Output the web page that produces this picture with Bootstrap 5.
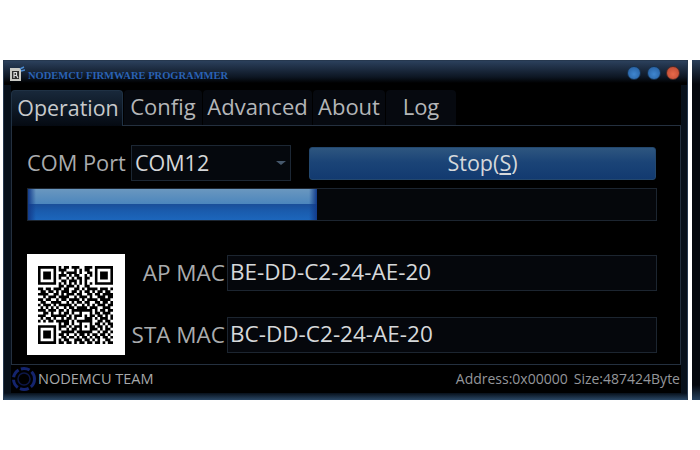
<!DOCTYPE html>
<html lang="en">
<head>
  <meta charset="UTF-8">
  <meta name="viewport" content="width=device-width, initial-scale=1">
  <title>NodeMCU Firmware Programmer</title>
  <link href="https://cdn.jsdelivr.net/npm/bootstrap@5.3.2/dist/css/bootstrap.min.css" rel="stylesheet">
  <style>
    body {
      background: #fff;
      margin: 0;
      height: 450px;
      overflow: hidden;
      font-family: "Open Sans", "Noto Sans", sans-serif;
    }
    .desk { padding: 60px 0 0 3px; gap: 4px; }
    .app-win {
      width: 685px;
      height: 340px;
      flex: none;
      background: #000;
      border: 1px solid #26384f;
      border-bottom: 0;
      box-shadow: inset 7px 0 0 #07101b, inset -6px 0 0 #07101b;
    }
    .next-win {
      flex: 1;
      height: 340px;
      background: linear-gradient(#2a3f5a, #05080e 24px, #05080e 325px, #27405e);
    }
    .title-bar {
      height: 24px;
      padding: 5px 7px 0 6px;
      background: linear-gradient(#2b405c, #0d1623 16px, #000 22px);
    }
    .app-title {
      font-family: "Liberation Serif", serif;
      font-weight: 700;
      font-size: 10.5px;
      line-height: 14px;
      color: #2a62b4;
      margin-left: 3px;
      margin-top: 3px;
      white-space: nowrap;
    }
    .win-dot { width: 14px; height: 14px; border-radius: 50%; margin-left: 6px; border: 1px solid #16314f; background: radial-gradient(circle at 50% 60%, #3f86cf, #235a9a); }
    .win-dot.close-dot { background: radial-gradient(circle at 50% 60%, #e8694a, #b6452f); border-color: #4d2a26; margin-left: 5px; }
    .tab-strip { padding: 5px 0 0 7px; gap: 1px; border: 0; height: 41px; }
    .tab-strip .nav-link {
      height: 36px;
      margin: 0;
      padding: 0;
      font-size: 22px;
      line-height: 33px;
      color: #b4b6b8;
      text-align: center;
      background: #06090f;
      border: 0;
      border-radius: 4px 4px 0 0;
    }
    .tab-strip .nav-link.active {
      color: #c8cacc;
      font-size: 21.4px;
      padding-left: 2px;
      background: linear-gradient(#18283a, #050a12);
      border: 1px solid #1f3144;
      border-bottom: 0;
      position: relative;
      z-index: 1;
    }
    .tab-op { width: 112px; }
    .tab-cfg { width: 78px; }
    .tab-adv { width: 109px; }
    .tab-abt { width: 72px; }
    .tab-log { width: 70px; }
    .tab-pane-box {
      margin: 0 6px 0 7px;
      height: 240px;
      padding: 19px 23px 0 15px;
      border: 1px solid #24303f;
      margin-top: -1px;
    }
    .field-label { font-size: 22.5px; color: #a9abad; line-height: 36px; white-space: nowrap; }
    .field-label.com-label { width: 104px; font-size: 21.8px; }
    .form-select.com-select {
      width: 160px;
      height: 36px;
      padding: 0 0 0 3px;
      font-size: 21.5px;
      line-height: 32px;
      color: #d4d6d8;
      background-color: #05080d;
      background-image: none;
      border: 1px solid #1c2734;
      border-radius: 0;
    }
    .select-wrap { position: relative; }
    .select-arrow {
      position: absolute;
      right: 5px;
      top: 16px;
      border: 5px solid transparent;
      border-top: 4px solid #46586c;
      border-bottom: 0;
    }
    .btn.stop-btn {
      width: 347px;
      height: 33px;
      margin: 2px 0 0 18px;
      padding: 0 0 2px;
      font-size: 21.5px;
      line-height: 29px;
      color: #d5d8db;
      background: linear-gradient(#2e567f, #1b4477 45%, #123a70);
      border: 1px solid #23476d;
      border-radius: 3px;
    }
    .progress.flash-bar {
      height: 33px;
      margin-top: 7px;
      background: #05070b;
      border: 1px solid #1c2530;
      border-radius: 0;
    }
    .progress.flash-bar .progress-bar {
      background:
        linear-gradient(90deg, #123a8a, transparent 8px, transparent calc(100% - 8px), #123a8a),
        linear-gradient(#6a97bf, #4c86bd 48%, #1a4f9a 50%, #1a5bac 70%, #1c66bc);
    }
    .qr-box {
      width: 98px;
      height: 101px;
      margin-top: 1px;
      background: #fff;
      flex: none;
      padding: 12px 11px;
    }
    .qr-box svg { display: block; }
    .mac-list { gap: 26px; padding-top: 2px; }
    .mac-label { width: 102px; text-align: right; padding-right: 2px; flex: none; }
    .form-control.mac-input {
      height: 36px;
      padding: 0 0 3px 2px;
      font-size: 22.5px;
      color: #d6d8da;
      background: #05070c;
      border: 1px solid #1c2530;
      border-radius: 0;
    }
    .status-bar { height: 28px; padding: 0 7px 0 7px; }
    .team-name { font-size: 14.5px; color: #a6a8aa; line-height: 26px; margin-left: 1px; }
    .flash-info { font-size: 14px; color: #94969a; line-height: 26px; white-space: nowrap; }
    .flash-info span + span { margin-left: 6px; }
    .bottom-edge { height: 7px; background: linear-gradient(#07101b, #2a4765); }
  </style>
</head>
<body>
  <div class="desk d-flex">
    <div class="app-win d-flex flex-column">
      <div class="title-bar d-flex align-items-start">
        <svg width="15" height="15" viewBox="0 0 15 15">
          <rect x="0" y="2" width="11" height="13" fill="#c9c9c4"/>
          <rect x="2" y="5" width="7" height="8" fill="#2b2b2b"/>
          <path d="M4 12V6.500H6.500V9.500H4M6.500 9.500L8 12" fill="none" stroke="#ddd" stroke-width="1.200"/>
          <path d="M10 3L14 1M11 5L15 4" stroke="#4a8ad0" stroke-width="1.500"/>
        </svg>
        <div class="app-title">NODEMCU FIRMWARE PROGRAMMER</div>
        <div class="ms-auto d-flex">
          <div class="win-dot"></div>
          <div class="win-dot"></div>
          <div class="win-dot close-dot"></div>
        </div>
      </div>

      <ul class="nav nav-tabs tab-strip">
        <li class="nav-item"><a class="nav-link active tab-op" href="#">Operation</a></li>
        <li class="nav-item"><a class="nav-link tab-cfg" href="#">Config</a></li>
        <li class="nav-item"><a class="nav-link tab-adv" href="#">Advanced</a></li>
        <li class="nav-item"><a class="nav-link tab-abt" href="#">About</a></li>
        <li class="nav-item"><a class="nav-link tab-log" href="#">Log</a></li>
      </ul>

      <div class="tab-pane-box">
        <div class="d-flex">
          <div class="field-label com-label">COM Port</div>
          <div class="select-wrap">
            <select class="form-select com-select"><option>COM12</option></select>
            <span class="select-arrow"></span>
          </div>
          <button type="button" class="btn stop-btn">Stop(<u>S</u>)</button>
        </div>
        <div class="progress flash-bar">
          <div class="progress-bar" style="width: 46%"></div>
        </div>
        <div class="d-flex mt-4 pt-2">
          <div class="qr-box">
            <svg id="qr" width="75" height="78" viewBox="0 0 29 29" preserveAspectRatio="none"><path id="qrPath" fill="#000"/></svg>
          </div>
          <div class="mac-list d-flex flex-column flex-grow-1">
            <div class="d-flex">
              <div class="field-label mac-label">AP MAC</div>
              <input class="form-control mac-input" type="text" value="BE-DD-C2-24-AE-20">
            </div>
            <div class="d-flex">
              <div class="field-label mac-label">STA MAC</div>
              <input class="form-control mac-input" type="text" value="BC-DD-C2-24-AE-20">
            </div>
          </div>
        </div>
      </div>

      <div class="status-bar d-flex align-items-center">
        <svg width="26" height="26" viewBox="0 0 26 26" fill="none">
          <circle cx="13" cy="13" r="10.500" stroke="#14246e" stroke-width="3" stroke-dasharray="9 2.500"/>
          <circle cx="13" cy="13" r="6" stroke="#0d1748" stroke-width="1.500"/>
        </svg>
        <div class="team-name">NODEMCU TEAM</div>
        <div class="flash-info ms-auto"><span>Address:0x00000</span><span>Size:487424Byte</span></div>
      </div>
      <div class="bottom-edge mt-auto"></div>
    </div>
    <div class="next-win"></div>
  </div>

  <script src="https://cdn.jsdelivr.net/npm/bootstrap@5.3.2/dist/js/bootstrap.bundle.min.js"></script>
  <script>
    // 29x29 matrix, finders are right, the data part only looks like the screenshot
    const rows = [
      '11111110101101110011101111111',
      '10000010111000101011001000001',
      '10111010010111101001101011101',
      '10111010111010110010101011101',
      '10111010100101011011001011101',
      '10000010011011101010001000001',
      '11111110101010101010101111111',
      '00000000110111010011000000000',
      '11011011101100110101111011101',
      '01101101011101101011010110110',
      '11110011010111011001101101111',
      '00101110111100101110100111011',
      '11011001011011110101111011110',
      '01100111100101011011001101101',
      '10111010111110100101010111011',
      '01010101001011011110111001110',
      '11101110110101111111101011011',
      '00110100101101001000101101110',
      '11100111111010111010110110101',
      '01011010010110100011101011101',
      '10101101111101011111100110110',
      '00000000101101001000101101011',
      '11111110111010111010110110101',
      '10000010100101101000111010110',
      '10111010011111011111100101101',
      '10111010110100101101011011010',
      '10111010011011010110101101101',
      '10000010101100111011010100110',
      '11111110110110101101101101011'
    ];
    let d = '';
    rows.forEach((row, y) => {
      [...row].forEach((cell, x) => {
        if (cell === '1') d += `M${x} ${y}h1v1h-1z`;
      });
    });
    document.getElementById('qrPath').setAttribute('d', d);
  </script>
</body>
</html>
